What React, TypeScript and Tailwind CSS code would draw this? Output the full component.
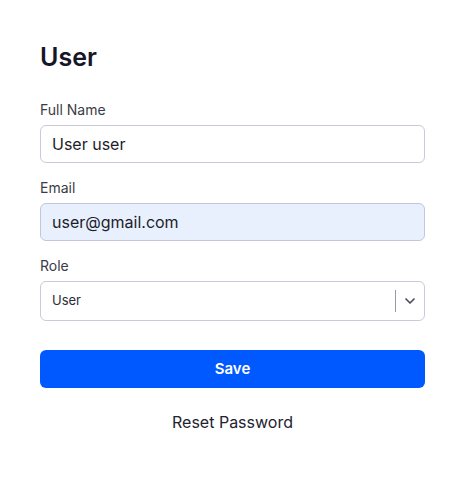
import React from 'react';
import { ChevronDown } from 'lucide-react';

function Field({ label, children }: { label: string; children: React.ReactNode }) {
  return (
    <div className="flex flex-col">
      <label className="text-[14px] text-[#3b3b45] mb-[6px] leading-[18px]">{label}</label>
      {children}
    </div>
  );
}

export default function App() {
  return (
    <div className="w-[470px] h-[478px] bg-white px-[40px] pt-[42px] font-['Inter',sans-serif] text-[#111827]">
      <h1 className="text-[25px] font-semibold leading-[30px] text-[#161629]">User</h1>

      <div className="mt-[29px] flex flex-col gap-[16px] w-[385px]">
        <Field label="Full Name">
          <div className="h-[38px] rounded-[6px] border border-[#c9ccd8] px-[11px] flex items-center text-[16px] text-[#1d1d2b]">
            User user
          </div>
        </Field>
        <Field label="Email">
          <div className="h-[38px] rounded-[6px] border border-[#c1c7d8] bg-[#e8f0fe] px-[11px] flex items-center text-[16px] text-[#1d1d2b]">
            user@gmail.com
          </div>
        </Field>
        <Field label="Role">
          <div className="h-[40px] rounded-[6px] border border-[#c9ccd8] pl-[11px] flex items-center text-[13px] text-[#2b2b36]">
            <span className="flex-1">User</span>
            <span className="w-px h-[22px] bg-[#9a9aa6]" />
            <span className="w-[28px] flex justify-center">
              <ChevronDown className="w-[16px] h-[16px] text-[#4a4a58]" strokeWidth={2.5} />
            </span>
          </div>
        </Field>
      </div>

      <button className="mt-[29px] w-[385px] h-[38px] rounded-[6px] bg-[#0059ff] text-white text-[15px] font-semibold">
        Save
      </button>

      <div className="mt-[23px] w-[385px] text-center text-[16px] leading-[22px] text-[#222230]">Reset Password</div>
    </div>
  );
}
